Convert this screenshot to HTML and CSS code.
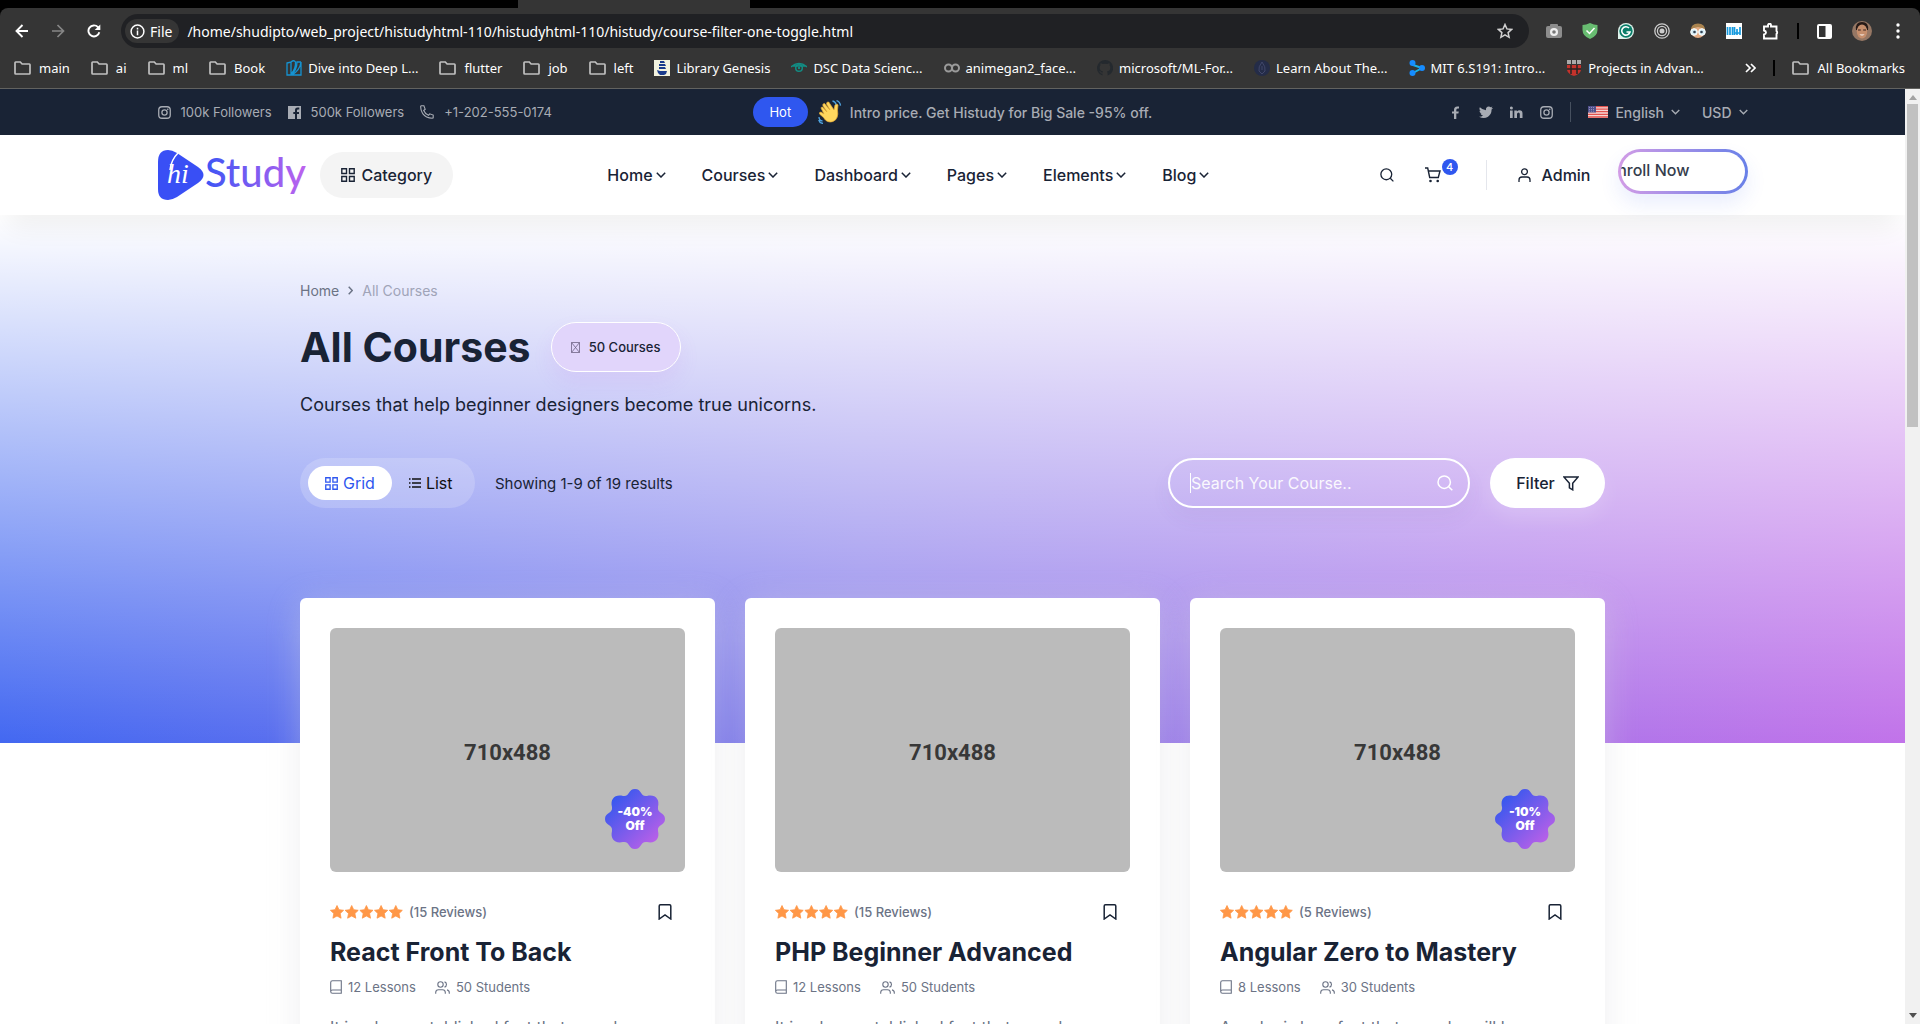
FILE: index.html
```html
<!DOCTYPE html>
<html lang="en">
<head>
<meta charset="utf-8">
<title>All Courses - Histudy</title>
<link rel="stylesheet" href="styles.css">
</head>
<body>
<svg class="sprite" aria-hidden="true">
  <defs>
    <linearGradient id="brand" x1="0" y1="0" x2="1" y2="1"><stop offset=".1" stop-color="#2f57ef"/><stop offset=".9" stop-color="#c060e8"/></linearGradient>
    <linearGradient id="brand-x"><stop offset="0" stop-color="#3d55f5"/><stop offset="1" stop-color="#bd63ee"/></linearGradient>
  </defs>
  <symbol id="folder" viewBox="0 0 17 14"><path d="M1.7 1h4.6l1.8 2h7.2q.7 0 .7.7v8.6q0 .7-.7.7H1.7q-.7 0-.7-.7V1.7Q1 1 1.700 1z" fill="none" stroke="#c0c0c0" stroke-width="1.700"/></symbol>
  <symbol id="chev" viewBox="0 0 10 6"><path d="M.8.8 5 5 9.200.8" fill="none" stroke="currentColor" stroke-width="1.500"/></symbol>
  <symbol id="grid" viewBox="0 0 14 14"><path d="M.8.8h4.700v4.700H.8zM8.500.8h4.700v4.700H8.500zM.8 8.500h4.700v4.700H.8zM8.500 8.500h4.700v4.700H8.500z" fill="none" stroke="currentColor" stroke-width="1.400"/></symbol>
  <symbol id="insta" viewBox="0 0 14 14"><rect x=".8" y=".8" width="12.400" height="12.400" rx="3.500" fill="none" stroke="currentColor" stroke-width="1.400"/><circle cx="7" cy="7" r="2.800" fill="none" stroke="currentColor" stroke-width="1.400"/><circle cx="10.500" cy="3.500" r=".9" fill="currentColor"/></symbol>
  <symbol id="search" viewBox="0 0 16 16"><circle cx="7.200" cy="7.200" r="6.200" fill="none" stroke="currentColor" stroke-width="1.500"/><path d="m11.700 11.700 3.600 3.600" stroke="currentColor" stroke-width="1.500"/></symbol>
  <symbol id="star" viewBox="0 0 14 14"><path d="m7 .5 2 4.200 4.600.6-3.400 3.200.9 4.700L7 11l-4.100 2.200.9-4.700L.4 5.300 5 4.700z" fill="#ff9747" stroke="#ff9747" stroke-width=".8" stroke-linejoin="round"/></symbol>
  <symbol id="stars" viewBox="0 0 73 14"><use href="#star" width="14" height="14"/><use href="#star" x="14.700" width="14" height="14"/><use href="#star" x="29.400" width="14" height="14"/><use href="#star" x="44.100" width="14" height="14"/><use href="#star" x="58.800" width="14" height="14"/></symbol>
  <symbol id="mark" viewBox="0 0 14 16"><path d="M1.200 15V2q0-1.200 1.200-1.200h9.200q1.200 0 1.200 1.200v13L7 11z" fill="none" stroke="currentColor" stroke-width="1.500"/></symbol>
  <symbol id="book" viewBox="0 0 12 14"><path d="M2.500.7h8.800v12.600H2.500Q.7 13.300.7 11.500v-9Q.7.700 2.500.7zM.7 11.500q0-1.500 1.800-1.500h8.800" fill="none" stroke="currentColor" stroke-width="1.100"/></symbol>
  <symbol id="users" viewBox="0 0 15 13"><g fill="none" stroke="currentColor" stroke-width="1.100"><circle cx="5.500" cy="3.500" r="2.700"/><path d="M.7 12.700v-1.200q0-2.800 2.800-2.800h4q2.800 0 2.800 2.800v1.200M9.500.9a2.700 2.700 0 0 1 0 5.200M12 8.900q2.300.5 2.300 2.800v1"/></g></symbol>
  <symbol id="seal" viewBox="0 0 60 60"><path fill="url(#brand)" d="M30 0C37 0 35 8 42 7C50 5 55 10 53 18C52 25 60 23 60 30C60 37 52 35 53 42C55 50 50 55 42 53C35 52 37 60 30 60C23 60 25 52 18 53C10 55 5 50 7 42C8 35 0 37 0 30C0 23 8 25 7 18C5 10 10 5 18 7C25 8 23 0 30 0Z"/></symbol>
</svg>

<header class="browser">
  <div class="tabs"><span class="tab"></span></div>
  <div class="toolbar">
    <button class="tool" aria-label="Back"><svg width="14" height="14" viewBox="0 0 14 14"><path d="M7.500 1 1.500 7l6 6M1.500 7H13" fill="none" stroke="#fff" stroke-width="1.900"/></svg></button>
    <button class="tool" aria-label="Forward"><svg width="14" height="14" viewBox="0 0 14 14"><path d="m6.500 1 6 6-6 6M12.500 7H1" fill="none" stroke="#868686" stroke-width="1.700"/></svg></button>
    <button class="tool" aria-label="Reload"><svg width="14" height="14" viewBox="0 0 14 14"><path d="M12.300 8.200A5.500 5.500 0 1 1 11 3.200L12.500 5" fill="none" stroke="#fff" stroke-width="1.900"/><path d="M13.300.5v5.600H7.700z" fill="#fff"/></svg></button>
    <div class="omnibox">
      <span class="file"><svg width="15" height="15" viewBox="0 0 15 15"><circle cx="7.500" cy="7.500" r="6.400" fill="none" stroke="#fff" stroke-width="1.500"/><path d="M7.500 6.500v4.700M7.500 3.800v1.600" stroke="#fff" stroke-width="1.500"/></svg>File</span>
      <span class="url">/home/shudipto/web_project/histudyhtml-110/histudyhtml-110/histudy/course-filter-one-toggle.html</span>
      <svg width="16" height="16" viewBox="0 0 16 16"><path d="m8 1.500 1.900 4.400 4.700.5-3.500 3.200 1 4.700L8 11.900l-4.100 2.400 1-4.700L1.400 6.400l4.700-.5z" fill="none" stroke="#d0d0d0" stroke-width="1.500"/></svg>
    </div>
    <div class="extensions">
      <svg width="16" height="16" viewBox="0 0 16 16"><rect y="3" width="16" height="12" rx="2" fill="#8d8d8d"/><rect x="4" y="1" width="8" height="4" rx="1" fill="#8d8d8d"/><circle cx="8" cy="9" r="4" fill="#eee"/><circle cx="8" cy="9" r="1.800" fill="#777"/></svg>
      <svg width="16" height="16" viewBox="0 0 16 16"><path d="M8 0q4 2 7.500 2v5q0 6-7.500 9Q.5 13 .5 7V2Q4 2 8 0z" fill="#68bc71"/><path d="m4.500 7.500 3 3 5-5.500" fill="none" stroke="#fff" stroke-width="1.500"/></svg>
      <svg width="16" height="16" viewBox="0 0 16 16"><path d="M0 16V8a8 8 0 1 1 8 8z" fill="#dff3ec"/><circle cx="8" cy="8" r="6.700" fill="#0b7d69"/><path d="M11 5a4.200 4.200 0 1 0 1 4H8.500" fill="none" stroke="#fff" stroke-width="1.600"/></svg>
      <svg width="16" height="16" viewBox="0 0 16 16"><g fill="none" stroke="#ccc" stroke-width="1.300"><circle cx="8" cy="8" r="7.200"/><circle cx="8" cy="8" r="4.600"/></g><circle cx="8" cy="8" r="2.500" fill="#ccc"/></svg>
      <svg width="16" height="16" viewBox="0 0 16 16"><circle cx="8" cy="8" r="7" fill="#e3ac84"/><path d="M1 7q0-6.500 7-6.500T15 7q-4-3-7-3T1 7z" fill="#a9834f"/><circle cx="4" cy="9" r="3.300" fill="#d6edf5" stroke="#fff"/><circle cx="12" cy="9" r="3.300" fill="#d6edf5" stroke="#fff"/><circle cx="4.500" cy="9" r="1.300" fill="#345"/><circle cx="11.500" cy="9" r="1.300" fill="#345"/></svg>
      <svg width="16" height="16" viewBox="0 0 16 16"><path fill="#fff" d="M0 0h16v16H0z"/><path d="M1.500 4v8M4 4v8M6.500 4v8M8.500 4v8M11 6v6M14 4v8M9 10h5" stroke="#169bdf" stroke-width="1.700"/></svg>
      <svg width="17" height="17" viewBox="0 0 17 17"><path d="M2 3.500h4V2.200a1.500 1.500 0 0 1 3 0v1.300h5.500V8a2 2 0 0 1 0 3v4.500H2v-4q2-.5 2-2t-2-2z" fill="none" stroke="#fff" stroke-width="1.900"/></svg>
      <span class="divider"></span>
      <svg width="15" height="15" viewBox="0 0 15 15"><rect x="1" y="1" width="13" height="13" rx="1" fill="none" stroke="#fff" stroke-width="2"/><path d="M8.500 1H14v13H8.500z" fill="#fff"/></svg>
      <svg width="20" height="20" viewBox="0 0 20 20"><circle cx="10" cy="10" r="10" fill="#967764"/><path d="M4 9q-1-8 6-8t6 8z" fill="#261a17"/><ellipse cx="10" cy="10.500" rx="5.200" ry="7" fill="#c68e6c"/><path d="M6 9h2.800M11.200 9H14" stroke="#38231c"/><path d="M7.300 13.500q2.700 2 5.400 0z" fill="#fff"/></svg>
      <svg width="12" height="16" viewBox="0 0 12 16" fill="#fff"><circle cx="6" cy="2" r="1.700"/><circle cx="6" cy="8" r="1.700"/><circle cx="6" cy="14" r="1.700"/></svg>
    </div>
  </div>
  <nav class="bookmarks" aria-label="Bookmarks">
    <a class="folder" href="#"><svg width="17" height="14"><use href="#folder"/></svg>main</a>
    <a class="folder" href="#"><svg width="17" height="14"><use href="#folder"/></svg>ai</a>
    <a class="folder" href="#"><svg width="17" height="14"><use href="#folder"/></svg>ml</a>
    <a class="folder" href="#"><svg width="17" height="14"><use href="#folder"/></svg>Book</a>
    <a href="#"><svg width="16" height="16" viewBox="0 0 16 16"><path d="M1 3 5 2v13H1zM15 2v13H6Q14 10 15 2zM5 15Q11 10 11 2h4M5 2q3-2.500 4.500 0Q10 9 5 14" fill="none" stroke="#1593d2" stroke-width="1.300"/></svg>Dive into Deep L...</a>
    <a class="folder" href="#"><svg width="17" height="14"><use href="#folder"/></svg>flutter</a>
    <a class="folder" href="#"><svg width="17" height="14"><use href="#folder"/></svg>job</a>
    <a class="folder" href="#"><svg width="17" height="14"><use href="#folder"/></svg>left</a>
    <a href="#"><svg width="16" height="16" viewBox="0 0 16 16"><path fill="#f3f3df" d="M0 0h16v16H0z"/><path d="M6 1h4l1 2H6zM5 4h6l1 2H5zM5 7h6l1 2H5zM3 10l3 1h7l-1 3-2 1H6l-2-2z" fill="#1a3b8c"/></svg>Library Genesis</a>
    <a href="#"><svg width="16" height="16" viewBox="0 0 16 16"><path d="M0 7q8-7 16 0M2 6h12" fill="none" stroke="#128d84" stroke-width="1.500"/><circle cx="8" cy="8" r="3.300" fill="none" stroke="#128d84" stroke-width="1.500"/><circle cx="8" cy="8" r="1.200" fill="#128d84"/></svg>DSC Data Scienc...</a>
    <a href="#"><svg width="16" height="16" viewBox="0 0 16 16"><g fill="none" stroke="#9a9a9a" stroke-width="2"><circle cx="4.500" cy="8" r="3.500"/><circle cx="11.500" cy="8" r="3.500"/></g></svg>animegan2_face...</a>
    <a href="#"><svg width="16" height="16" viewBox="0 0 16 16"><path d="M8 0a8 8 0 0 0-2.500 15.600v-2Q3.500 14 3 12l-1-1q1.500-.2 2 1 .8.900 1.700.4l.3-1Q2.500 11 2.700 7.500q0-1.300.8-2.200-.4-1 0-2 1 0 2.300.8 2.200-.6 4.400 0 1.300-.8 2.300-.8.400 1 0 2 .8.900.8 2.200.2 3.500-3.300 4 .8.500.6 4.100A8 8 0 0 0 8 0z" fill="#24292e"/></svg>microsoft/ML-For...</a>
    <a href="#"><svg width="16" height="16" viewBox="0 0 16 16"><circle cx="8" cy="8" r="8" fill="#242c48"/><path d="M8 2q-4 5-3 9l3 3 3-3q1-4-3-9zM8 6v4" fill="none" stroke="#41476a"/></svg>Learn About The...</a>
    <a href="#"><svg width="16" height="16" viewBox="0 0 16 16"><path d="M4 3v2l9 3-9 5" fill="none" stroke="#19b3e8" stroke-width="2"/><g fill="#168cff"><circle cx="3.500" cy="3" r="3"/><circle cx="3.500" cy="13" r="3"/><circle cx="13" cy="8" r="3"/></g></svg>MIT 6.S191: Intro...</a>
    <a href="#"><svg width="16" height="16" viewBox="0 0 16 16"><path d="M1 0h4v4H1zM6 0h4v4H6zM11 0h4v4h-4z" fill="#aaa"/><path d="M1 5h14v5q-1 4-7 6-6-2-7-6z" fill="#c5322b"/><path d="M5 5v9M11 5v9M1 9h14" stroke="#252525" stroke-width="1.500"/></svg>Projects in Advan...</a>
    <button class="more" aria-label="More bookmarks"><svg width="11" height="10" viewBox="0 0 11 10"><path d="m1 1 4 4-4 4M6 1l4 4-4 4" fill="none" stroke="#fff" stroke-width="1.700"/></svg></button>
    <span class="divider"></span>
    <a class="folder" href="#"><svg width="17" height="14"><use href="#folder"/></svg>All Bookmarks</a>
  </nav>
</header>

<div class="viewport">
  <div class="page">
    <div class="topbar">
      <div class="wide topbar-grid">
        <div class="contacts">
          <a href="#"><svg width="13" height="13"><use href="#insta"/></svg>100k Followers</a>
          <a href="#"><svg width="13" height="13" viewBox="0 0 13 13"><path d="M0 0h13v13H9V8h2V6H9V4.500q0-1 1-1h1.300v-2H9.500Q7 1.500 7 4v2H5.300v2H7v5H0z" fill="currentColor"/></svg>500k Followers</a>
          <a href="#"><svg width="14" height="14" viewBox="0 0 14 14"><path d="M1.200.8h2.700l1.300 3.500L3.700 5.500q1.500 3.500 4.800 4.800l1.200-1.500 3.500 1.300v2.700l-1 .5Q6 13 2.500 8.300.5 5 .7 1.300z" fill="none" stroke="currentColor" stroke-width="1.100"/></svg>+1-202-555-0174</a>
        </div>
        <div class="promo">
          <span class="hot">Hot</span>
          <svg width="24" height="24" viewBox="0 0 24 24"><path d="M4 10q-2-3 .5-3L9 12 5 6q-.8-2.500 1.500-2.500L12 10 8.500 4q0-2.500 2.200-2L16 10l1-5q1.500-2 3 0l-.5 5q1.500 9-4.500 11.500-6 2-9.500-4L1.500 14q-.5-2 1.500-2l3 2z" fill="#ffd75e" stroke="#e8ab35" stroke-width=".7"/><path d="M14.500 1q3 .7 3.500 3.500M18.500.7q3.500 1 4 5M1 17q0 3.500 3.500 4M.7 20q.8 3 4.300 3.500" fill="none" stroke="#4fa3e0" stroke-width="1.300"/></svg>
          <span>Intro price. Get Histudy for Big Sale -95% off.</span>
        </div>
        <div class="locale">
          <a href="#" aria-label="Facebook"><svg width="13" height="13" viewBox="0 0 13 13"><path d="M5 13V7.500H3v-2h2V4q0-3.500 3.300-3.500H10v2H8.700Q7.300 2.500 7.300 4v1.500h2.500l-.4 2H7.300V13z" fill="currentColor"/></svg></a>
          <a href="#" aria-label="Twitter"><svg width="14" height="13" viewBox="0 0 14 13"><path d="M14 2q-.6.800-1.400 1.400Q12.600 8 9 10.700 5 13.200 0 10.800q2.500.1 4-1.200-2-.3-2.600-2h1.200Q.5 6.800.4 4.700l1.300.4Q-.3 3.500.9 1.200 3.500 4 7 4.200 6.500.8 9.700.4q1.200 0 2 .8L13.500.5 12.300 2.200z" fill="currentColor"/></svg></a>
          <a href="#" aria-label="LinkedIn"><svg width="13" height="13" viewBox="0 0 13 13"><path d="M0 4.500h2.700V12H0zM4.300 4.500h2.600v1Q8 4.300 9.500 4.300q3 0 3 3.200V12H9.800V8q0-1.500-1.300-1.500T7 8v4H4.300z" fill="currentColor"/><circle cx="1.400" cy="2" r="1.500" fill="currentColor"/></svg></a>
          <a href="#" aria-label="Instagram"><svg width="13" height="13"><use href="#insta"/></svg></a>
          <span class="rule"></span>
          <button class="pick"><svg width="20" height="12" viewBox="0 0 20 12"><path fill="#f6d6d4" d="M0 0h20v12H0z"/><path d="M0 .7h20M0 3.200h20M0 5.700h20M0 8.300h20M0 11h20" stroke="#e2524e" stroke-width="1.300"/><path fill="#50508b" d="M0 0h8v6.500H0z"/><path d="M1 1.500h6M1 3.500h6M1 5.200h6" stroke="#aaa9d0" stroke-width=".7" stroke-dasharray="1 1"/></svg><span>English</span><svg width="9" height="6"><use href="#chev"/></svg></button>
          <button class="pick usd"><span>USD</span><svg width="9" height="6"><use href="#chev"/></svg></button>
        </div>
      </div>
    </div>

    <header class="site-header">
      <div class="wide header-row">
        <div class="brand-side">
          <a class="logo" href="#" aria-label="Histudy">
            <svg width="150" height="52" viewBox="0 0 150 52"><path d="M0 13Q0 1 10 1q4 0 9 3l21 14q11 8 0 16L19 48q-5 3-9 3Q0 51 0 40z" fill="#394ff5"/><path d="M12 21Q13 11 20 4" fill="none" stroke="#fff" stroke-width="1.500"/><text x="9" y="34" font-family="'Liberation Serif', serif" font-style="italic" font-size="28" fill="#fff">hi</text><text x="47" y="38" font-family="Lato, sans-serif" font-size="40" fill="url(#brand-x)">Study</text></svg>
          </a>
          <button class="category"><svg width="14" height="14"><use href="#grid"/></svg>Category</button>
        </div>
        <nav class="menu" aria-label="Main">
          <a href="#">Home<svg width="10" height="6"><use href="#chev"/></svg></a>
          <a href="#">Courses<svg width="10" height="6"><use href="#chev"/></svg></a>
          <a href="#">Dashboard<svg width="10" height="6"><use href="#chev"/></svg></a>
          <a href="#">Pages<svg width="10" height="6"><use href="#chev"/></svg></a>
          <a href="#">Elements<svg width="10" height="6"><use href="#chev"/></svg></a>
          <a href="#">Blog<svg width="10" height="6"><use href="#chev"/></svg></a>
        </nav>
        <div class="actions">
          <button class="icon-btn" aria-label="Search"><svg width="14" height="14"><use href="#search"/></svg></button>
          <a class="cart" href="#" aria-label="Cart"><svg width="16" height="16" viewBox="0 0 16 16"><path d="M0 1h2.700l2 9.500h8.600L15 4H3.500" fill="none" stroke="currentColor" stroke-width="1.400"/><circle cx="5.500" cy="14" r="1.300" fill="currentColor"/><circle cx="12.700" cy="14" r="1.300" fill="currentColor"/></svg><span class="count">4</span></a>
          <span class="rule"></span>
          <a class="admin" href="#"><svg width="13" height="14" viewBox="0 0 13 14"><circle cx="6.500" cy="3.700" r="2.900" fill="none" stroke="currentColor" stroke-width="1.300"/><path d="M1 14v-2q0-3 3-3h5q3 0 3 3v2" fill="none" stroke="currentColor" stroke-width="1.300"/></svg>Admin</a>
          <button class="enroll"><span>Enroll Now</span></button>
        </div>
      </div>
    </header>

    <section class="hero">
      <div class="content">
        <nav class="crumbs" aria-label="Breadcrumb"><a href="#">Home</a><svg width="5" height="9" viewBox="0 0 5 9"><path d="m.7.700 3.500 3.800L.7 8.300" fill="none" stroke="#6b7385" stroke-width="1.400"/></svg><span>All Courses</span></nav>
        <div class="title-row">
          <h1>All Courses</h1>
          <span class="total"><svg width="9" height="11" viewBox="0 0 9 11"><path d="M.5.500h8v10h-8zL8.500 10.500M8.500.5l-8 10" fill="none" stroke="#6f6385" stroke-width=".8"/></svg>50 Courses</span>
        </div>
        <p class="lead">Courses that help beginner designers become true unicorns.</p>
        <div class="controls">
          <div class="toggle">
            <button class="view active"><svg width="13" height="13"><use href="#grid"/></svg>Grid</button>
            <button class="view"><svg width="12" height="10" viewBox="0 0 12 10"><path d="M0 1h1.500M0 5h1.500M0 9h1.500M3 1h9M3 5h9M3 9h9" stroke="currentColor" stroke-width="1.300"/></svg>List</button>
          </div>
          <span class="showing">Showing 1-9 of 19 results</span>
          <label class="search"><span class="caret"></span><input type="text" placeholder="Search Your Course.." aria-label="Search your course"><svg width="16" height="16"><use href="#search"/></svg></label>
          <button class="filter">Filter<svg width="16" height="15" viewBox="0 0 16 15"><path d="M.9.900h14.200L9.700 7.300v6.500l-3.300-2V7.300z" fill="none" stroke="currentColor" stroke-width="1.500"/></svg></button>
        </div>
      </div>
    </section>

    <main class="content cards">
      <article class="card">
        <div class="thumb">710x488<span class="off"><svg width="60" height="60"><use href="#seal"/></svg><b>-40%<br>Off</b></span></div>
        <div class="review"><svg width="73" height="14"><use href="#stars"/></svg><span>(15 Reviews)</span><button class="save" aria-label="Bookmark"><svg width="14" height="16"><use href="#mark"/></svg></button></div>
        <h2>React Front To Back</h2>
        <div class="meta"><svg width="12" height="14"><use href="#book"/></svg><span>12 Lessons</span><svg width="15" height="13"><use href="#users"/></svg><span>50 Students</span></div>
        <p>It is a long established fact that a reader will be distracted.</p>
      </article>
      <article class="card">
        <div class="thumb">710x488</div>
        <div class="review"><svg width="73" height="14"><use href="#stars"/></svg><span>(15 Reviews)</span><button class="save" aria-label="Bookmark"><svg width="14" height="16"><use href="#mark"/></svg></button></div>
        <h2>PHP Beginner Advanced</h2>
        <div class="meta"><svg width="12" height="14"><use href="#book"/></svg><span>12 Lessons</span><svg width="15" height="13"><use href="#users"/></svg><span>50 Students</span></div>
        <p>It is a long established fact that a reader will be distracted.</p>
      </article>
      <article class="card">
        <div class="thumb">710x488<span class="off"><svg width="60" height="60"><use href="#seal"/></svg><b>-10%<br>Off</b></span></div>
        <div class="review"><svg width="73" height="14"><use href="#stars"/></svg><span>(5 Reviews)</span><button class="save" aria-label="Bookmark"><svg width="14" height="16"><use href="#mark"/></svg></button></div>
        <h2>Angular Zero to Mastery</h2>
        <div class="meta"><svg width="12" height="14"><use href="#book"/></svg><span>8 Lessons</span><svg width="15" height="13"><use href="#users"/></svg><span>30 Students</span></div>
        <p>Angular is long fact that a reader will be distracted.</p>
      </article>
    </main>
  </div>
  <div class="scrollbar" aria-hidden="true"><i class="up"></i><i class="bar"></i><i class="down"></i></div>
</div>
</body>
</html>
```
FILE: styles.css
```css
* { box-sizing: border-box; }
body { margin: 0; height: 100vh; display: flex; flex-direction: column; overflow: hidden; background: #000; font-family: Inter, sans-serif; font-size: 16px; color: #192335; }
a { color: inherit; text-decoration: none; white-space: nowrap; }
button { font: inherit; color: inherit; background: none; border: 0; padding: 0; white-space: nowrap; display: flex; align-items: center; }
svg { display: block; flex: none; }
h1, h2, p { margin: 0; }
.sprite { position: absolute; width: 0; height: 0; }

/* Browser frame */
.browser { flex: none; font-family: "Noto Sans", sans-serif; color: #fff; border-bottom: 1px solid #62625f; background: #000; }
.tabs { height: 8px; background: #000; display: flex; padding-left: 27%; }
.tab { width: 232px; background: #353535; }
.toolbar { height: 46px; padding: 0 16px 0 15px; display: flex; align-items: center; background: #353535; border-radius: 8px 8px 0 0; }
.tool { width: 14px; margin-right: 22px; }
.omnibox { flex: 1; height: 34px; margin-left: -2px; border-radius: 17px; background: #202124; display: flex; align-items: center; gap: 8px; padding: 0 16px 0 4px; min-width: 0; }
.file { display: flex; align-items: center; gap: 5px; height: 24px; padding: 0 7px 0 5px; border-radius: 12px; background: #353535; font-size: 14px; }
.url { flex: 1; font-size: 14px; white-space: nowrap; overflow: hidden; }
.extensions { display: flex; align-items: center; gap: 20px; margin-left: 17px; }
.divider { width: 2px; height: 16px; background: #000; }
.extensions .divider { margin: 0 -2px; }
.bookmarks { height: 34px; padding: 0 15px 6px 14px; display: flex; align-items: center; gap: 21px; font-size: 13px; background: #353535; }
.bookmarks a { display: flex; align-items: center; gap: 6px; }
.bookmarks .folder { gap: 8px; }
.bookmarks .divider { margin: 0 -4px; }
.more { margin-left: auto; }

/* Page viewport */
.viewport { flex: 1; min-height: 0; display: flex; background: #fff; }
.page { flex: 1; min-width: 0; overflow: hidden; }
.wide { width: 84%; max-width: 1590px; margin: 0 auto; }
.content { width: 84%; max-width: 1305px; margin: 0 auto; }
.scrollbar { width: 15px; flex: none; background: #f1f1f1; display: flex; flex-direction: column; align-items: center; padding: 6px 0; }
.up, .down { border: 4px solid transparent; }
.up { border-top: 0; border-bottom: 5px solid #a3a3a3; }
.down { border-bottom: 0; border-top: 5px solid #505050; }
.bar { width: 11px; height: 35%; margin: 4px 0 auto; background: #c1c1c1; }

.topbar { background: #192335; color: #a8acb4; font-size: 14px; }
.topbar-grid { height: 46px; display: grid; grid-template-columns: 1fr auto 1fr; align-items: center; }
.contacts, .contacts a, .promo, .locale, .pick { display: flex; align-items: center; }
.contacts { gap: 16px; font-size: 13px; }
.contacts a { gap: 10px; }
.promo { font-weight: 500; gap: 8px; white-space: nowrap; }
.hot { height: 30px; width: 55px; border-radius: 15px; background: #2f57ef; color: #fff; font-size: 13px; font-weight: 400; display: grid; place-items: center; margin-right: 2px; }
.locale { justify-content: flex-end; gap: 17px; }
.rule { width: 1px; height: 20px; background: #46505f; }
.pick { gap: 7px; font-weight: 500; }
.usd { margin-left: 5px; }

.site-header { position: relative; background: #fff; box-shadow: 0 20px 26px -8px rgba(0,0,0,.06); }
.header-row { height: 80px; display: flex; justify-content: space-between; align-items: center; font-weight: 500; }
.brand-side, .actions, .menu, .menu a, .admin { display: flex; align-items: center; }
.brand-side { gap: 12px; }
.category { height: 46px; padding: 0 21px; border-radius: 23px; background: #f4f4f4; gap: 7px; }
.menu { gap: 36px; margin-right: 16px; }
.menu a { gap: 3px; }
.cart { position: relative; margin-left: 31px; }
.count { position: absolute; left: 17px; top: -8px; width: 16px; height: 16px; border-radius: 8px; background: #2f57ef; color: #fff; font-size: 11px; line-height: 16px; text-align: center; }
.actions .rule { height: 30px; margin: 0 31px 0 45px; background: #e4e6ec; }
.admin { gap: 11px; }
.enroll { width: 130px; height: 45px; margin: -7px 0 0 27px; padding-bottom: 3px; border: 3px solid transparent; border-radius: 23px; background: linear-gradient(#fff, #fff) padding-box, linear-gradient(90deg, #d29ce6, #6880e8) border-box; box-shadow: 0 10px 20px rgba(47,87,239,.1); overflow: hidden; color: #353d4c; }
.enroll span { margin-left: -13px; }

.hero { padding: 66px 0 235px; background: linear-gradient(#fff, rgba(255,255,255,.02)), linear-gradient(90deg, #3f65f1, #8378ea 45%, #c070e9); }
.crumbs { display: flex; align-items: center; gap: 9px; height: 18px; font-size: 14px; color: #6b7385; }
.crumbs span { color: #a0a4b8; }
.title-row { display: flex; align-items: center; gap: 20px; height: 50px; margin-top: 23px; }
h1 { font-size: 41px; line-height: 50px; font-weight: 700; }
.total { height: 50px; width: 130px; border: 1px solid #fff; border-radius: 25px; display: flex; align-items: center; justify-content: center; gap: 9px; font-size: 13px; font-weight: 500; background: #e1d5fb; box-shadow: 0 10px 20px rgba(192,96,232,.1); }
.lead { margin-top: 19px; font-size: 18px; line-height: 28px; }
.controls { margin-top: 39px; display: flex; align-items: center; }
.toggle { width: 175px; height: 50px; border-radius: 25px; background: rgba(255,255,255,.18); display: flex; align-items: center; padding: 0 8px; }
.view { height: 34px; padding: 0 17px; gap: 5px; border-radius: 17px; color: #101010; }
.active { background: #fff; color: #2f57ef; }
.showing { margin-left: 20px; font-size: 15px; }
.search { margin-left: auto; width: 302px; height: 50px; border: 2px solid #fff; border-radius: 25px; display: flex; align-items: center; padding: 0 15px 0 20px; color: #fff; box-shadow: 0 10px 20px rgba(100,60,160,.06); }
.caret { width: 1px; height: 20px; background: #fff; }
.search input { flex: 1; min-width: 0; border: 0; outline: 0; padding: 0; background: none; font: inherit; color: #fff; }
.search input::placeholder { color: #fff; opacity: .9; }
.filter { width: 115px; height: 50px; margin-left: 20px; border-radius: 25px; background: #fff; justify-content: center; gap: 8px; font-weight: 500; box-shadow: 0 10px 20px rgba(255,255,255,.16); }

.cards { position: relative; margin-top: -145px; display: grid; grid-template-columns: repeat(3, 1fr); gap: 30px; }
.card { min-width: 0; padding: 30px; border-radius: 6px; background: #fff; box-shadow: 0 6px 34px rgba(215,216,222,.41); color: #6b7385; }
.thumb { position: relative; aspect-ratio: 355 / 244; padding-top: 4px; border-radius: 6px; background: #bbb; color: #383838; font: 700 22px Roboto, sans-serif; display: grid; place-items: center; }
.off { position: absolute; right: 20px; bottom: 23px; display: grid; place-items: center; color: #fff; font: 700 12px/14px Inter, sans-serif; text-align: center; }
.off > * { grid-area: 1 / 1; }
.review { display: flex; align-items: center; gap: 6px; height: 20px; margin-top: 30px; font-size: 13px; font-weight: 500; }
.save { margin: 0 13px 0 auto; color: #192335; }
h2 { margin-top: 14px; font-size: 25px; line-height: 32px; color: #192335; white-space: nowrap; }
.meta { display: flex; align-items: center; gap: 6px; height: 20px; margin-top: 9px; font-size: 13px; }
.meta span + svg { margin-left: 13px; }
.card p { margin-top: 16px; padding-right: 25px; line-height: 28px; }
```
